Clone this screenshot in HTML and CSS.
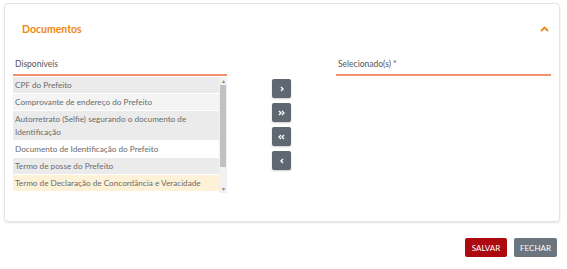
FILE: index.html
```html
<!DOCTYPE html>
<html lang="pt-BR">
<head>
    <meta charset="UTF-8">
    <meta name="viewport" content="width=device-width, initial-scale=1.0">
    <title>Documentos</title>
    <link rel="stylesheet" href="styles.css">
</head>
<body>

<div class="card">
    <div class="card-header">
        <h3>Documentos</h3>
        <svg class="collapse-icon" width="9" height="6" viewBox="0 0 9 6">
            <path d="M1 5 L4.5 1.5 L8 5" fill="none" stroke="#f0870f" stroke-width="1.8"/>
        </svg>
    </div>

    <div class="picklist">
        <div class="pick-column">
            <div class="pick-label">Disponíveis</div>
            <div class="pick-box">
                <ul class="pick-items">
                    <li class="item-gray">CPF do Prefeito</li>
                    <li class="item-light">Comprovante de endereço do Prefeito</li>
                    <li class="item-gray">Autorretrato (Selfie) segurando o documento de Identificação</li>
                    <li class="item-white">Documento de Identificação do Prefeito</li>
                    <li class="item-gray">Termo de posse do Prefeito</li>
                    <li class="item-hover">Termo de Declaração de Concordância e Veracidade</li>
                </ul>
                <div class="scrollbar">
                    <span class="scroll-arrow">&#9652;</span>
                    <div class="scroll-track"><div class="scroll-thumb"></div></div>
                    <span class="scroll-arrow">&#9662;</span>
                </div>
            </div>
        </div>

        <div class="pick-buttons">
            <button class="move-button" title="Mover">
                <svg width="6" height="6" viewBox="0 0 6 6"><path d="M2 1 L4 3 L2 5" fill="none" stroke="#fff" stroke-width="1.4"/></svg>
            </button>
            <button class="move-button" title="Mover todos">
                <svg width="7" height="6" viewBox="0 0 7 6"><path d="M1 1 L3 3 L1 5 M4 1 L6 3 L4 5" fill="none" stroke="#fff" stroke-width="1.3"/></svg>
            </button>
            <button class="move-button" title="Remover todos">
                <svg width="7" height="6" viewBox="0 0 7 6"><path d="M3 1 L1 3 L3 5 M6 1 L4 3 L6 5" fill="none" stroke="#fff" stroke-width="1.3"/></svg>
            </button>
            <button class="move-button" title="Remover">
                <svg width="6" height="6" viewBox="0 0 6 6"><path d="M4 1 L2 3 L4 5" fill="none" stroke="#fff" stroke-width="1.4"/></svg>
            </button>
        </div>

        <div class="pick-column">
            <div class="pick-label">Selecionado(s) *</div>
        </div>
    </div>
</div>

<div class="footer-actions">
    <button class="btn btn-save">Salvar</button>
    <button class="btn btn-close">Fechar</button>
</div>

</body>
</html>
```

FILE: styles.css
```css
body {
    font-family: Lato, "Open Sans", Arial, sans-serif;
    margin: 0;
    padding: 3px 7px 0 4px;
    background-color: #fff;
    color: #666;
}
.card {
    height: 217px;
    border: 1px solid #e4e4e4;
    border-radius: 4px;
    box-shadow: 0 1px 2px rgba(0, 0, 0, 0.12);
    padding: 0 8px 0 8px;
}
.card-header {
    display: flex;
    justify-content: space-between;
    align-items: center;
    height: 49px;
    padding: 0 2px 0 9px;
}
.card-header h3 {
    margin: 0;
    font-size: 10.5px;
    font-weight: 700;
    color: #f0870f;
}
.collapse-icon {
    display: block;
}
.picklist {
    display: grid;
    grid-template-columns: 214px 19px 215px;
    justify-content: space-between;
}
.pick-label {
    font-size: 8.5px;
    color: #555;
    padding: 6px 2px 5px;
    border-bottom: 2px solid #f39270;
}
.pick-box {
    display: flex;
    margin-top: 1px;
    height: 116px;
}
.pick-items {
    list-style: none;
    margin: 0;
    padding: 0;
    flex: 1;
}
.pick-items li {
    font-size: 8.2px;
    line-height: 13px;
    padding: 1.5px 3px 1.5px 2px;
    margin-bottom: 1px;
    color: #6b6b6b;
}
.item-gray {
    background-color: #ebebeb;
}
.item-light {
    background-color: #f4f4f4;
}
.item-white {
    background-color: #fff;
}
.item-hover {
    background-color: #fdf2d8;
}
.scrollbar {
    width: 8px;
    background-color: #f1f1f1;
    display: flex;
    flex-direction: column;
    align-items: center;
}
.scroll-arrow {
    font-size: 6px;
    line-height: 8px;
    color: #888;
}
.scroll-track {
    flex: 1;
    width: 100%;
    display: flex;
    justify-content: center;
}
.scroll-thumb {
    width: 6px;
    height: 82px;
    background-color: #c1c1c1;
}
.pick-buttons {
    display: flex;
    flex-direction: column;
    gap: 5px;
    padding-top: 26px;
}
.move-button {
    width: 19px;
    height: 19px;
    padding: 0;
    border: none;
    border-radius: 2px;
    background-color: #5f6771;
    box-shadow: 0 1px 2px rgba(0, 0, 0, 0.2);
    display: flex;
    align-items: center;
    justify-content: center;
    cursor: pointer;
}
.move-button svg {
    display: block;
}
.footer-actions {
    display: flex;
    justify-content: flex-end;
    gap: 7px;
    margin-top: 16px;
    padding-right: 3px;
}
.btn {
    font-family: Lato, Arial, sans-serif;
    font-size: 8px;
    text-transform: uppercase;
    color: #fff;
    border: none;
    border-radius: 2px;
    height: 19px;
    padding: 0;
    cursor: pointer;
}
.btn-save {
    width: 42px;
    background-color: #ad0a0f;
}
.btn-close {
    width: 43px;
    background-color: #6c757d;
}
```
